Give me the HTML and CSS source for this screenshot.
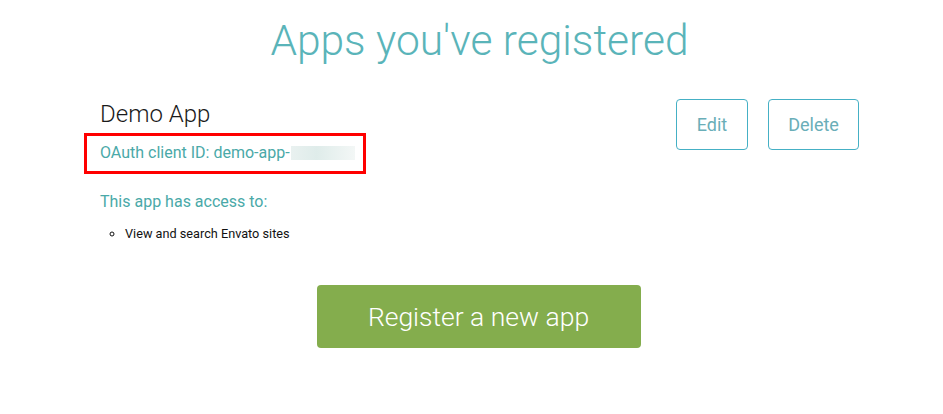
FILE: index.html
```html
<!DOCTYPE html>
<html>
<head>
<meta charset="utf-8">
<link rel="stylesheet" href="styles.css">
</head>
<body>
<main class="page">
  <h1 class="title">Apps you've registered</h1>
  <section class="app">
    <div class="app-info">
      <h2 class="app-name">Demo App</h2>
      <div class="client-id"><span class="client-text">OAuth client ID: demo-app-</span><span class="blur"></span></div>
      <p class="access">This app has access to:</p>
      <ul class="scopes">
        <li>View and search Envato sites</li>
      </ul>
    </div>
    <div class="actions">
      <a class="btn-outline btn-edit">Edit</a>
      <a class="btn-outline btn-delete">Delete</a>
    </div>
  </section>
  <div class="register-wrap">
    <a class="btn-register">Register a new app</a>
  </div>
</main>
</body>
</html>
```
FILE: styles.css
```css
html, body {
  margin: 0;
  padding: 0;
  background: #fff;
  font-family: Roboto, "Liberation Sans", sans-serif;
}
.page {
  width: 791px;
  margin-left: 84px;
  padding-top: 13px;
}
.title {
  margin: 0;
  text-align: center;
  font-weight: 300;
  font-size: 42.5px;
  line-height: 56px;
  color: #5ab4b9;
}
.app {
  display: flex;
  justify-content: space-between;
  margin-top: 30px;
}
.app-info {
  display: flex;
  flex-direction: column;
  align-items: flex-start;
}
.app-name {
  margin: 0 0 0 16px;
  font-weight: 300;
  font-size: 24px;
  line-height: 30px;
  color: #1a1a1a;
  white-space: nowrap;
}
.client-id {
  margin-top: 4px;
  border: 3px solid #f00;
  padding: 7px 8px 8px 13px;
  width: 255px;
  font-size: 16px;
  line-height: 20px;
  color: #4aa9a8;
  display: flex;
  align-items: center;
  white-space: nowrap;
}
.blur {
  display: inline-block;
  width: 71px;
  height: 14px;
  margin-left: 1px;
  background: linear-gradient(90deg, #e9f1f0, #dfecea 40%, #f3f7f6);
}
.access {
  margin: 18px 0 0 16px;
  font-size: 16px;
  line-height: 20px;
  color: #4aa9a8;
  white-space: nowrap;
}
.scopes {
  margin: 13px 0 0 16px;
  padding-left: 25px;
  list-style-type: circle;
  font-size: 12.7px;
  line-height: 17px;
  color: #111;
  white-space: nowrap;
}
.actions {
  display: flex;
  gap: 20px;
  padding-right: 16px;
  align-items: flex-start;
}
.btn-outline {
  display: flex;
  align-items: center;
  justify-content: center;
  height: 51px;
  box-sizing: border-box;
  border: 1px solid #45b0c5;
  border-radius: 4px;
  font-size: 18px;
  color: #6aaeb8;
}
.btn-edit { width: 72px; }
.btn-delete { width: 91px; }
.register-wrap {
  display: flex;
  justify-content: center;
  margin-top: 43px;
}
.btn-register {
  display: flex;
  align-items: center;
  justify-content: center;
  width: 324px;
  height: 63px;
  margin-left: -2px;
  background: #84ad4d;
  border-radius: 4px;
  color: #fff;
  font-weight: 300;
  font-size: 26.5px;
}
```
